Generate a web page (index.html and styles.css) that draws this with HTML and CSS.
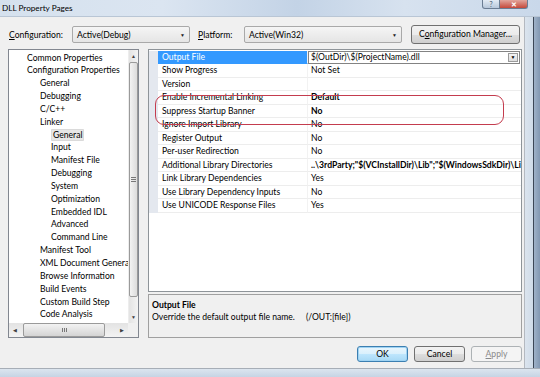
FILE: index.html
```html
<!DOCTYPE html>
<html>
<head>
<meta charset="utf-8">
<link rel="stylesheet" href="styles.css">
</head>
<body>
<div class="window">
  <div class="titlebar">
    <span class="title">DLL Property Pages</span>
    <div class="caption">
      <span class="cap-help">?</span>
      <span class="cap-close">✕</span>
    </div>
  </div>
  <div class="middle">
    <div class="dialog">
      <div class="toprow">
        <span class="lbl lbl-config"><u>C</u>onfiguration:</span>
        <div class="combo combo-config"><span>Active(Debug)</span><span class="arrow">▼</span></div>
        <span class="lbl lbl-plat"><u>P</u>latform:</span>
        <div class="combo combo-plat"><span>Active(Win32)</span><span class="arrow">▼</span></div>
        <button class="btn btn-mgr">C<u>o</u>nfiguration Manager...</button>
      </div>
      <div class="body">
        <div class="tree">
          <div class="tree-list">
            <div class="ti l0">Common Properties</div>
            <div class="ti l0">Configuration Properties</div>
            <div class="ti l1">General</div>
            <div class="ti l1">Debugging</div>
            <div class="ti l1">C/C++</div>
            <div class="ti l1">Linker</div>
            <div class="ti l2"><span class="tsel">General</span></div>
            <div class="ti l2">Input</div>
            <div class="ti l2">Manifest File</div>
            <div class="ti l2">Debugging</div>
            <div class="ti l2">System</div>
            <div class="ti l2">Optimization</div>
            <div class="ti l2">Embedded IDL</div>
            <div class="ti l2">Advanced</div>
            <div class="ti l2">Command Line</div>
            <div class="ti l1">Manifest Tool</div>
            <div class="ti l1">XML Document Generator</div>
            <div class="ti l1">Browse Information</div>
            <div class="ti l1">Build Events</div>
            <div class="ti l1">Custom Build Step</div>
            <div class="ti l1">Code Analysis</div>
            <div class="ti l1">Application Verifier</div>
          </div>
          <div class="vscroll">
            <div class="sarr">▲</div>
            <div class="vthumb"><span class="vgrip"></span></div>
            <div class="strack"></div>
            <div class="sarr">▼</div>
          </div>
          <div class="hscroll">
            <div class="sarr">◀</div>
            <div class="hthumb"><span class="hgrip"></span></div>
            <div class="strack"></div>
            <div class="sarr">▶</div>
          </div>
          <div class="corner"></div>
        </div>
        <div class="rightpanel">
          <div class="grid">
            <div class="row sel"><span class="gut"></span><span class="name">Output File</span><span class="val combo-cell"><span class="vtext">$(OutDir)\$(ProjectName).dll</span><span class="dd">▼</span></span></div>
            <div class="row"><span class="gut"></span><span class="name">Show Progress</span><span class="val">Not Set</span></div>
            <div class="row"><span class="gut"></span><span class="name">Version</span><span class="val"></span></div>
            <div class="row"><span class="gut"></span><span class="name">Enable Incremental Linking</span><span class="val b">Default</span></div>
            <div class="row"><span class="gut"></span><span class="name">Suppress Startup Banner</span><span class="val b">No</span></div>
            <div class="row"><span class="gut"></span><span class="name">Ignore Import Library</span><span class="val">No</span></div>
            <div class="row"><span class="gut"></span><span class="name">Register Output</span><span class="val">No</span></div>
            <div class="row"><span class="gut"></span><span class="name">Per-user Redirection</span><span class="val">No</span></div>
            <div class="row"><span class="gut"></span><span class="name">Additional Library Directories</span><span class="val b">..\3rdParty;"$(VCInstallDir)\Lib";"$(WindowsSdkDir)\Lib"</span></div>
            <div class="row"><span class="gut"></span><span class="name">Link Library Dependencies</span><span class="val">Yes</span></div>
            <div class="row"><span class="gut"></span><span class="name">Use Library Dependency Inputs</span><span class="val">No</span></div>
            <div class="row"><span class="gut"></span><span class="name">Use UNICODE Response Files</span><span class="val">Yes</span></div>
            <div class="annot"></div>
          </div>
          <div class="desc">
            <div class="desc-title">Output File</div>
            <div class="desc-text">Override the default output file name.&nbsp;&nbsp;&nbsp;&nbsp;&nbsp;(/OUT:[file])</div>
          </div>
        </div>
      </div>
      <div class="buttons">
        <button class="btn btn-ok">OK</button>
        <button class="btn">Cancel</button>
        <button class="btn btn-dis"><u>A</u>pply</button>
      </div>
    </div>
    <div class="frame-right"></div>
  </div>
  <div class="frame-bottom"></div>
</div>
</body>
</html>
```
FILE: styles.css
```css
* { box-sizing: border-box; }
html, body { margin: 0; padding: 0; }
body {
  width: 540px;
  height: 377px;
  overflow: hidden;
  font-family: Lato, "Open Sans", sans-serif;
  font-size: 8.6px;
  color: #000;
  background: #5f7896;
}
.window {
  width: 540px;
  height: 377px;
  display: flex;
  flex-direction: column;
}
.titlebar {
  height: 17px;
  flex: none;
  display: flex;
  align-items: flex-start;
  padding: 0 12px 0 2px;
  background: linear-gradient(to right, #d5e1ee 0%, #dbe5f1 30%, #c3d3e6 55%, #d7e2ef 75%, #c9d8ea 100%);
  border-bottom: 1px solid #b9c6d5;
}
.title {
  font-size: 8.2px;
  line-height: 16px;
  color: #000;
}
.caption {
  margin-left: auto;
  display: flex;
}
.cap-help, .cap-close {
  height: 9px;
  display: flex;
  align-items: center;
  justify-content: center;
  font-size: 7px;
  line-height: 1;
  border: 1px solid #6b7d93;
  border-top: none;
}
.cap-help {
  width: 18px;
  background: linear-gradient(#e3ebf4, #b8c8db);
  color: #4a5a70;
  border-radius: 0 0 0 3px;
}
.cap-close {
  width: 28px;
  background: linear-gradient(#e2a59c, #c5493b);
  color: #fff;
  border-left: none;
  border-radius: 0 0 3px 0;
  font-weight: bold;
}
.middle {
  flex: 1;
  display: flex;
  min-height: 0;
}
.dialog {
  flex: 1;
  background: #f0f0f0;
  padding: 8px 2px 0 8px;
  display: flex;
  flex-direction: column;
  border-right: 1px solid #b4b9c0;
}
.frame-right {
  width: 16px;
  flex: none;
  background: linear-gradient(to right, #dbe4ee 0, #cfdbe8 8px, #3c4756 8px, #3c4756 9px, #9fb2c8 9px, #7d93ae 16px);
}
.frame-bottom {
  height: 9px;
  flex: none;
  border-top: 1px solid #a7aeb7;
  background: linear-gradient(#dce5ef, #c6d4e4);
}
.toprow {
  height: 19px;
  display: flex;
  align-items: center;
  flex: none;
}
.lbl { line-height: 12px; }
.lbl-config { width: 63px; margin-left: 1px; }
.lbl-plat { width: 46px; margin-left: 8px; }
.combo {
  height: 17px;
  display: flex;
  align-items: center;
  justify-content: space-between;
  padding: 0 4px 0 4px;
  border: 1px solid #a9a9a9;
  border-radius: 2px;
  background: linear-gradient(#f5f5f5, #e5e5e5);
}
.combo-config { width: 118px; }
.combo-plat { width: 158px; }
.arrow { font-size: 5px; color: #222; }
.btn {
  font-family: inherit;
  font-size: 8.6px;
  color: #000;
  border: 1px solid #707070;
  border-radius: 3px;
  background: linear-gradient(#f2f2f2 0%, #ebebeb 50%, #dddddd 51%, #cfcfcf 100%);
  padding: 0;
  margin: 0;
  line-height: 1;
}
.btn-mgr {
  width: 109px;
  height: 19px;
  margin-left: 9px;
}
.body {
  margin-top: 5px;
  height: 289px;
  display: flex;
  gap: 9px;
  flex: none;
}
.tree {
  width: 131px;
  height: 289px;
  border: 1px solid #828790;
  background: #fff;
  display: grid;
  grid-template-columns: 1fr 10px;
  grid-template-rows: 1fr 14px;
  overflow: hidden;
}
.tree-list {
  overflow: hidden;
  padding-top: 1.5px;
  white-space: nowrap;
}
.ti {
  height: 12.85px;
  line-height: 12.85px;
}
.l0 { padding-left: 18px; }
.l1 { padding-left: 31px; }
.l2 { padding-left: 42px; }
.tsel {
  background: #e6e6e6;
  border: 1px solid #dadada;
  padding: 0 1px;
  border-radius: 1px;
}
.vscroll {
  display: flex;
  flex-direction: column;
  background: linear-gradient(to right, #e3e3e3, #f3f3f3);
  border-left: 1px solid #ededed;
}
.hscroll {
  display: flex;
  align-items: stretch;
  background: linear-gradient(#e3e3e3, #f3f3f3);
}
.sarr {
  flex: none;
  width: 12px;
  height: 12px;
  display: flex;
  align-items: center;
  justify-content: center;
  font-size: 5px;
  color: #404040;
}
.vscroll .sarr { width: auto; }
.hscroll .sarr { height: auto; }
.vthumb {
  height: 235px;
  flex: none;
  border: 1px solid #9a9a9a;
  border-radius: 2px;
  background: linear-gradient(to right, #f3f3f3, #dcdcdc);
  display: flex;
  align-items: center;
  justify-content: center;
}
.vgrip {
  width: 5px;
  height: 5px;
  background: repeating-linear-gradient(#777 0 1px, transparent 1px 2px);
}
.hthumb {
  width: 82px;
  flex: none;
  margin-left: 2px;
  border: 1px solid #9a9a9a;
  border-radius: 2px;
  background: linear-gradient(#f3f3f3, #d4d4d4);
  display: flex;
  align-items: center;
  justify-content: center;
}
.hgrip {
  width: 5px;
  height: 4px;
  background: repeating-linear-gradient(to right, #777 0 1px, transparent 1px 2px);
}
.strack { flex: 1; }
.corner { background: #f0f0f0; }
.rightpanel {
  width: 374px;
  display: flex;
  flex-direction: column;
  gap: 2px;
}
.grid {
  position: relative;
  height: 243px;
  border: 1px solid #8e9499;
  background: #fff;
  overflow: hidden;
  padding-top: 0.5px;
}
.row {
  display: grid;
  grid-template-columns: 9px 150px 1fr;
  height: 13.5px;
  line-height: 13.5px;
  white-space: nowrap;
}
.gut { background: #e4e8ef; }
.name {
  padding-left: 4px;
  border-bottom: 1px solid #ededed;
  border-right: 1px solid #f2f2f2;
  overflow: hidden;
}
.val {
  padding-left: 3px;
  border-bottom: 1px solid #ededed;
  overflow: hidden;
}
.b { font-weight: bold; }
.sel .name {
  background: #3399ff;
  color: #fff;
  border-bottom-color: #3399ff;
}
.combo-cell {
  display: flex;
  justify-content: space-between;
  border: 1px solid #838383;
  padding: 0 0 0 2px;
  line-height: 11.5px;
  margin-right: 1px;
}
.dd {
  width: 10px;
  margin: 1px;
  border: 1px solid #9a9a9a;
  background: linear-gradient(#f4f4f4, #dedede);
  font-size: 5px;
  display: flex;
  align-items: center;
  justify-content: center;
}
.annot {
  position: absolute;
  left: 6px;
  top: 45px;
  width: 349px;
  height: 30px;
  border: 1.5px solid #c43c4e;
  border-radius: 9px;
}
.desc {
  height: 44px;
  border: 1px solid #a0a0a0;
  background: #f0f0f0;
  padding: 4px 3px 0 3px;
}
.desc-title {
  font-weight: bold;
  line-height: 12px;
}
.desc-text { line-height: 12px; }
.buttons {
  margin-top: 8px;
  display: flex;
  justify-content: flex-end;
  gap: 6px;
  padding-right: 0;
}
.buttons .btn {
  width: 51px;
  height: 16px;
}
.btn-ok {
  border-color: #3c7fb1;
  box-shadow: inset 0 0 0 1px #9fd3f3;
  background: linear-gradient(#eaf6fd 0%, #d9f0fc 50%, #bee6fd 51%, #a7d9f5 100%);
}
.btn-dis {
  border-color: #adb2b5;
  background: #f4f4f4;
  color: #8a8a8a;
}
```
